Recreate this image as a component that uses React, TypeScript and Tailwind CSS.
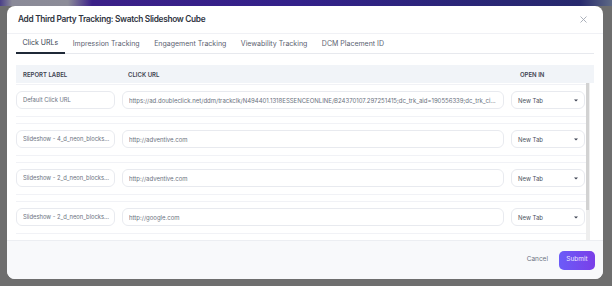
const tabs = ['Click URLs', 'Impression Tracking', 'Engagement Tracking', 'Viewability Tracking', 'DCM Placement ID'];

const rows = [
  {
    label: 'Default Click URL',
    url: 'https://ad.doubleclick.net/ddm/trackclk/N494401.1318ESSENCEONLINE/B24370107.297251415;dc_trk_aid=190556339;dc_trk_cid=140839254;dc_lat=;dc_rdid=;tag_for_child_directed_treatment=',
  },
  { label: 'Slideshow - 4_d_neon_blocks_square', url: 'http://adventive.com' },
  { label: 'Slideshow - 2_d_neon_blocks_square', url: 'http://adventive.com' },
  { label: 'Slideshow - 2_d_neon_blocks_square', url: 'http://google.com' },
  { label: 'Slideshow - 1_d_neon_blocks_square', url: 'http://adventive.com' },
];

export default function App() {
  return (
    <div
      className="w-[612px] h-[286px] overflow-hidden bg-[#6e6e6e] bg-no-repeat bg-[length:100%_6px] bg-[linear-gradient(to_right,#4a3f88_0px,#8a8a98_12px,#8c8c98_68px,#3b2088_92px,#33218a_300px,#2a2677_470px,#27296d_580px,#5d6985_612px)] pt-[6px] pl-[7px]"
      style={{ fontFamily: 'Inter, "Noto Sans", sans-serif' }}
    >
      <div className="w-[596px] h-[273px] rounded-[8px] bg-white flex flex-col overflow-hidden">
        {/* Header */}
        <div className="h-[28px] shrink-0 flex items-center justify-between pl-[11px] pr-[16px] border-b border-[#f0f1f5]">
          <span className="text-[8.3px] font-semibold text-[#2f3441] tracking-[-0.3px]">
            Add Third Party Tracking: Swatch Slideshow Cube
          </span>
          <svg width="7" height="7" viewBox="0 0 7 7" className="text-[#a3a8b3]">
            <path d="M0.5 0.5L6.5 6.5M6.5 0.5L0.5 6.5" stroke="currentColor" strokeWidth="0.9" />
          </svg>
        </div>

        {/* Tabs */}
        <div className="mx-[9px] h-[20px] shrink-0 flex gap-[1.5px] border-b border-[#e7e9ee]">
          {tabs.map((t, i) => (
            <div
              key={t}
              className={`h-[20px] px-[6.5px] flex items-center text-[7px] whitespace-nowrap ${
                i === 0 ? 'text-[#374151] border-b-2 border-[#1f2937] -mb-px' : 'text-[#5b6270]'
              }`}
            >
              {t}
            </div>
          ))}
        </div>

        {/* Table */}
        <div className="mx-[9px] mt-[11px] flex-1 flex flex-col min-h-0">
          <div className="h-[18px] shrink-0 flex items-center bg-[#f1f4f8] text-[6px] font-semibold uppercase text-[#3d4350]">
            <div className="w-[105px] pl-[7px]">Report Label</div>
            <div className="flex-1 pl-[7px]">Click URL</div>
            <div className="w-[85px] pl-[11px]">Open In</div>
          </div>

          <div className="h-[157px] flex overflow-hidden">
            <div className="w-[570px] flex flex-col gap-[6px] pt-[1px]">
              {rows.map((r, i) => (
                <div
                  key={i}
                  className="shrink-0 flex gap-[7px] pr-[1px] pt-[6px] pb-[7px] border-y border-[#f1f2f6]"
                >
                  <div className="w-[99px] h-[18px] shrink-0 rounded-[6px] border border-[#e8eaef] pl-[6px] pr-[4px] flex items-center text-[5.8px] text-[#6b7280]">
                    <span className="truncate">{r.label}</span>
                  </div>
                  <div className="flex-1 min-w-0 h-[18px] rounded-[6px] border border-[#e8eaef] px-[6px] flex items-center text-[6px] text-[#6b7280]">
                    <span className="truncate">{r.url}</span>
                  </div>
                  <div className="w-[74px] h-[18px] shrink-0 rounded-[6px] border border-[#e8eaef] pl-[6px] pr-[6px] flex items-center justify-between text-[6px] text-[#4b5160]">
                    <span>New Tab</span>
                    <svg width="4" height="3" viewBox="0 0 4 3">
                      <path d="M0 0.4H4L2 2.6Z" fill="#3b4150" />
                    </svg>
                  </div>
                </div>
              ))}
            </div>
            {/* scrollbar */}
            <div className="w-[4px] flex flex-col bg-[#eeeeee]">
              <div className="h-[127px] w-[3px] bg-[#d2d2d2]" />
            </div>
          </div>
        </div>

        {/* Footer */}
        <div className="h-[39px] shrink-0 border-t border-[#eceef2] bg-[#f8f9fb] flex items-center justify-end pr-[8px] gap-[11px]">
          <span className="text-[6.5px] text-[#6b7280]">Cancel</span>
          <div className="w-[36px] h-[19px] rounded-[5px] bg-[linear-gradient(to_right,#6b5cf8,#7a3ee8)] flex items-center justify-center text-[6.5px] text-[#ece8ff]">
            Submit
          </div>
        </div>
      </div>
    </div>
  );
}
